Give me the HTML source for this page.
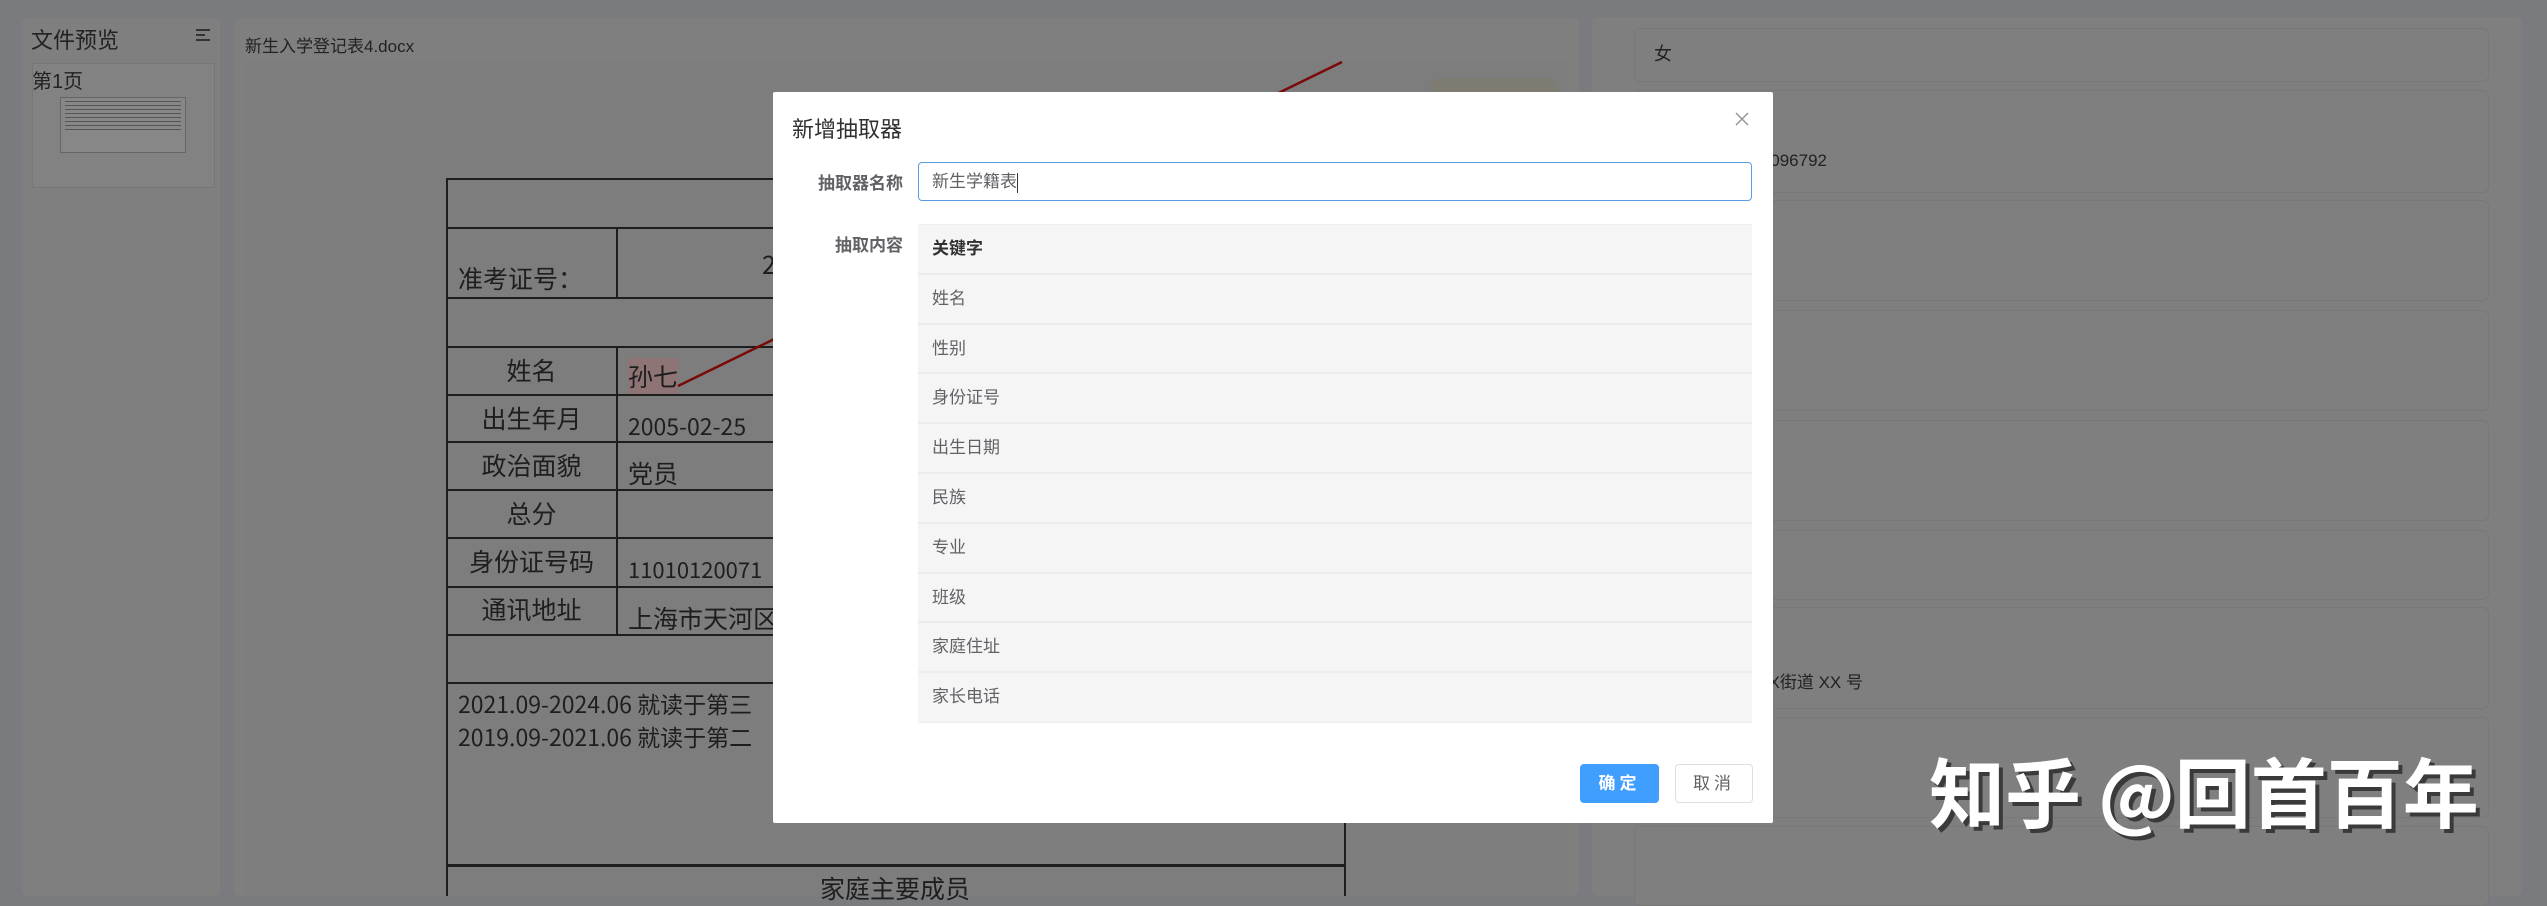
<!DOCTYPE html>
<html><head><meta charset="utf-8"><style>
*{margin:0;padding:0;box-sizing:border-box}
body{width:2547px;height:896px;overflow:hidden;background:#7a7b7e;position:relative;font-family:"Liberation Sans","Noto Sans CJK SC",sans-serif}
.a{position:absolute}
.panel{position:absolute;background:#7f7f7f;border-radius:6px}
.doc{font-family:"Noto Sans CJK SC",sans-serif;color:#1e1e1e;font-size:25px;position:absolute;white-space:nowrap}
.hl{position:absolute;background:#1e1e1e}
.card{position:absolute;left:1634px;width:855px;border:1px solid #787878;border-radius:6px;background:#7f7f7f}
.row{height:49.8px;border-bottom:2px solid #ececec;background:#f5f5f5;padding-left:14px;line-height:48px;font-size:17px;color:#606266}
.tl{height:1px;background:#555;margin:3px 4px}
</style></head><body>
<!-- left panel -->
<div class="panel" style="left:22px;top:18px;width:198px;height:878px"></div>
<div class="a" style="left:31px;top:23px;font-size:22px;color:#222">文件预览</div>
<div class="a" style="left:196px;top:29px;width:14px">
<div style="height:2px;background:#333;margin-bottom:3px"></div><div style="height:2px;background:#333;width:9px;margin-bottom:3px"></div><div style="height:2px;background:#333"></div></div>
<div class="a" style="left:32px;top:63px;width:183px;height:125px;background:#828282;border:1px solid #777"></div>
<div class="a" style="left:32px;top:65px;font-size:20px;color:#222">第1页</div>
<div class="a" style="left:60px;top:97px;width:126px;height:56px;background:#878787;border:1px solid #666">
<div class="tl"></div><div class="tl"></div><div class="tl"></div><div class="tl"></div><div class="tl"></div><div class="tl"></div><div class="tl"></div><div class="tl"></div></div>
<!-- main panel -->
<div class="panel" style="left:234px;top:18px;width:1345px;height:878px"></div>
<div class="a" style="left:245px;top:32px;font-size:17px;color:#222">新生入学登记表4.docx</div>
<div class="a" style="left:245px;top:61px;width:1322px;height:835px;background:#7d7d7d"></div>
<div class="a" style="left:1430px;top:78px;width:127px;height:50px;background:#7e7c72;border-radius:12px"></div>
<!-- document table -->
<div class="hl" style="left:446px;top:178px;width:2px;height:718px"></div>
<div class="hl" style="left:1344px;top:178px;width:2px;height:718px"></div>
<div class="hl" style="left:616px;top:228px;width:2px;height:70px"></div>
<div class="hl" style="left:616px;top:347px;width:2px;height:288px"></div>
<div class="hl" style="left:446px;top:178px;width:900px;height:2px"></div>
<div class="hl" style="left:446px;top:227px;width:900px;height:2px"></div>
<div class="hl" style="left:446px;top:297px;width:900px;height:2px"></div>
<div class="hl" style="left:446px;top:346px;width:900px;height:2px"></div>
<div class="hl" style="left:446px;top:394px;width:900px;height:2px"></div>
<div class="hl" style="left:446px;top:441px;width:900px;height:2px"></div>
<div class="hl" style="left:446px;top:489px;width:900px;height:2px"></div>
<div class="hl" style="left:446px;top:537px;width:900px;height:2px"></div>
<div class="hl" style="left:446px;top:586px;width:900px;height:2px"></div>
<div class="hl" style="left:446px;top:634px;width:900px;height:2px"></div>
<div class="hl" style="left:446px;top:682px;width:900px;height:2px"></div>
<div class="hl" style="left:446px;top:864px;width:900px;height:3px"></div>
<div class="doc" style="left:458px;top:260px">准考证号：</div>
<div class="doc" style="left:762px;top:246px">2</div>
<div class="doc" style="left:446px;width:171px;text-align:center;top:352px">姓名</div>
<div class="doc" style="left:446px;width:171px;text-align:center;top:400px">出生年月</div>
<div class="doc" style="left:446px;width:171px;text-align:center;top:447px">政治面貌</div>
<div class="doc" style="left:446px;width:171px;text-align:center;top:495px">总分</div>
<div class="doc" style="left:446px;width:171px;text-align:center;top:543px">身份证号码</div>
<div class="doc" style="left:446px;width:171px;text-align:center;top:591px">通讯地址</div>
<div class="doc" style="left:628px;top:358px;background:#8e7474">孙七</div>
<div class="doc" style="left:628px;top:408px;font-size:23px">2005-02-25</div>
<div class="doc" style="left:628px;top:455px">党员</div>
<div class="doc" style="left:628px;top:553px;font-size:22px">11010120071</div>
<div class="doc" style="left:628px;top:600px">上海市天河区</div>
<div class="doc" style="left:458px;top:686px;font-size:23px">2021.09-2024.06 就读于第三</div>
<div class="doc" style="left:458px;top:719px;font-size:23px">2019.09-2021.06 就读于第二</div>
<div class="doc" style="left:820px;top:870px">家庭主要成员</div>
<svg class="a" style="left:0;top:0" width="2547" height="896"><line x1="678" y1="386" x2="1342" y2="62" stroke="#7a0a0a" stroke-width="2.5"/></svg>
<!-- right panel -->
<div class="panel" style="left:1592px;top:17px;width:930px;height:879px"></div>
<div class="card" style="top:28px;height:54px"></div>
<div class="card" style="top:90px;height:103px"></div>
<div class="card" style="top:200px;height:101px"></div>
<div class="card" style="top:310px;height:101px"></div>
<div class="card" style="top:420px;height:101px"></div>
<div class="card" style="top:530px;height:70px"></div>
<div class="card" style="top:607px;height:102px"></div>
<div class="card" style="top:717px;height:101px"></div>
<div class="card" style="top:826px;height:80px"></div>
<div class="a" style="left:1654px;top:40px;font-size:18px;color:#222">女</div>
<div class="a" style="left:1627px;width:200px;text-align:right;top:151px;font-size:17px;color:#222">110101200711096792</div>
<div class="a" style="left:1563px;width:300px;text-align:right;top:668px;font-size:17px;color:#222">上海市XX街道 XX 号</div>
<div class="a" style="left:1929px;top:734px;font-size:76px;font-weight:bold;color:#fff;text-shadow:4px 4px 0 #3a3a3a;font-family:'Noto Sans CJK SC',sans-serif;white-space:nowrap">知乎 @回首百年</div>
<!-- modal -->
<div class="a" style="left:773px;top:92px;width:1000px;height:731px;background:#fff;border-radius:2px">
<div class="a" style="left:19px;top:20px;font-size:22px;color:#303133">新增抽取器</div>
<svg class="a" style="left:962px;top:20px" width="14" height="14"><path d="M1 1L13 13M13 1L1 13" stroke="#909399" stroke-width="1.4"/></svg>
<div class="a" style="left:20px;width:110px;text-align:right;top:77px;font-size:17px;font-weight:bold;color:#606266">抽取器名称</div>
<div class="a" style="left:145px;top:70px;width:834px;height:39px;border:1px solid #5d9be0;border-radius:4px;padding-left:13px;line-height:37px;font-size:17px;color:#606266">新生学籍表<span style="display:inline-block;width:1px;height:20px;background:#333;vertical-align:middle"></span></div>
<div class="a" style="left:20px;width:110px;text-align:right;top:139px;font-size:17px;font-weight:bold;color:#606266">抽取内容</div>
<div class="a" style="left:145px;top:132px;width:834px;border-top:1px solid #eee">
<div class="row" style="font-weight:bold;color:#303133">关键字</div>
<div class="row">姓名</div><div class="row">性别</div><div class="row">身份证号</div><div class="row">出生日期</div><div class="row">民族</div><div class="row">专业</div><div class="row">班级</div><div class="row">家庭住址</div><div class="row" style="border-bottom:1px solid #eee">家长电话</div>
</div>
<div class="a" style="left:807px;top:672px;width:79px;height:39px;background:#409eff;border-radius:4px;color:#fff;font-size:17px;font-weight:bold;text-align:center;line-height:39px;letter-spacing:4px">确定</div>
<div class="a" style="left:902px;top:672px;width:78px;height:39px;border:1px solid #dcdfe6;border-radius:4px;color:#606266;font-size:17px;text-align:center;line-height:37px;letter-spacing:4px">取消</div>
</div>
</body></html>
